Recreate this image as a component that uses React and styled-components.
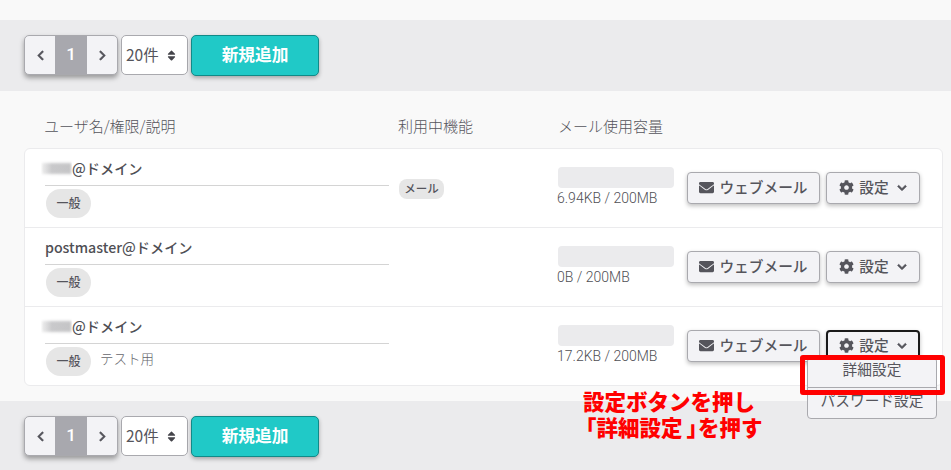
import React from 'react'
import styled, { createGlobalStyle } from 'styled-components'
import { FaChevronLeft, FaChevronRight, FaChevronDown, FaEnvelope, FaCog, FaSort } from 'react-icons/fa'

const GlobalStyle = createGlobalStyle`
  html, body { margin: 0; padding: 0; background: #f9f9f9; }
  body {
    width: 951px;
    height: 470px;
    overflow: hidden;
    font-family: "Noto Sans CJK JP", "Noto Sans", sans-serif;
    color: #55555c;
  }
  * { box-sizing: border-box; }
`

const users = [
  { blurred: true, name: '@ドメイン', feature: 'メール', used: '6.94KB / 200MB' },
  { name: 'postmaster@ドメイン', used: '0B / 200MB' },
  { blurred: true, name: '@ドメイン', note: 'テスト用', used: '17.2KB / 200MB', open: true },
]

const Toolbar = ({ bottom }) => (
  <Bar $bottom={bottom}>
    <Pager>
      <PageArrow><FaChevronLeft /></PageArrow>
      <PageNumber>1</PageNumber>
      <PageArrow><FaChevronRight /></PageArrow>
    </Pager>
    <PerPage>20件<FaSort /></PerPage>
    <AddButton>新規追加</AddButton>
  </Bar>
)

const App = () => {
  return (
    <Page>
      <GlobalStyle />
      <Toolbar />
      <Content>
        <HeaderRow>
          <span>ユーザ名/権限/説明</span>
          <span>利用中機能</span>
          <span>メール使用容量</span>
        </HeaderRow>
        <Card>
          {users.map((user, i) => (
            <Row key={i}>
              <NameCell>
                <UserName>
                  {user.blurred && <BlurPatch />}
                  {user.name}
                </UserName>
                <RoleLine>
                  <RolePill>一般</RolePill>
                  {user.note && <Note>{user.note}</Note>}
                </RoleLine>
              </NameCell>
              <FeatureCell>
                {user.feature && <FeaturePill>{user.feature}</FeaturePill>}
              </FeatureCell>
              <UsageCell>
                <UsageBar />
                <UsageText>{user.used}</UsageText>
              </UsageCell>
              <Actions>
                <ActionButton $width={133}>
                  <FaEnvelope size={15} /><ButtonLabel>ウェブメール</ButtonLabel>
                </ActionButton>
                <SettingsWrap>
                  <ActionButton $width={94} $focused={user.open}>
                    <FaCog size={15} /><ButtonLabel>設定</ButtonLabel><Caret />
                  </ActionButton>
                  {user.open && (
                    <Menu>
                      <MenuItem>詳細設定</MenuItem>
                      <MenuItem>パスワード設定</MenuItem>
                    </Menu>
                  )}
                  {user.open && <Highlight />}
                </SettingsWrap>
              </Actions>
            </Row>
          ))}
        </Card>
      </Content>
      <Toolbar bottom />
      <Annotation>
        設定ボタンを押し<br />
        <OpenBracket>「</OpenBracket>詳細設定<CloseBracket>」</CloseBracket>を押す
      </Annotation>
    </Page>
  )
}

export default App

const Page = styled.div`
  position: relative;
  width: 951px;
  height: 470px;
  padding-top: 20px;
  overflow: hidden;
`

const Bar = styled.div`
  height: ${(p) => (p.$bottom ? '69px' : '71px')};
  padding: 15px 24px 0;
  background: #ebebed;
  display: flex;
  align-items: flex-start;
  gap: 3px;
`

const Pager = styled.div`
  width: 94px;
  height: 40px;
  display: flex;
  border: 1px solid #a9a9ae;
  border-radius: 5px;
  overflow: hidden;
  background: #f3f3f6;
  box-shadow: 0 3px 5px rgba(0, 0, 0, 0.35);
`

const PageArrow = styled.div`
  flex: 1;
  display: flex;
  align-items: center;
  justify-content: center;
  color: #55555c;
  font-size: 11px;

  svg { stroke: currentColor; stroke-width: 25; }
`

const PageNumber = styled.div`
  width: 32px;
  padding-bottom: 2px;
  display: flex;
  align-items: center;
  justify-content: center;
  background: #a8a8ae;
  color: #fff;
  font-size: 17px;
  font-weight: 500;
  font-family: "Roboto", sans-serif;
`

const PerPage = styled.div`
  width: 67px;
  height: 40px;
  padding: 0 9px 3px 4px;
  display: flex;
  align-items: center;
  justify-content: space-between;
  background: #fff;
  border: 1px solid #a9a9ae;
  border-radius: 5px;
  font-size: 15.5px;
  color: #55555c;

  svg { font-size: 13px; color: #44444a; margin-top: 3px; }
`

const AddButton = styled.div`
  width: 128px;
  height: 41px;
  padding-bottom: 3px;
  display: flex;
  align-items: center;
  justify-content: center;
  background: #20c9c7;
  border: 1px solid #118a88;
  border-radius: 5px;
  color: #fff;
  font-size: 16.7px;
  font-weight: 700;
  box-shadow: 0 2px 4px rgba(0, 0, 0, 0.3);
`

const Content = styled.div`
  height: 310px;
  padding: 24px 8px 0 24px;
`

const HeaderRow = styled.div`
  height: 33px;
  display: grid;
  grid-template-columns: 354px 160px 1fr;
  padding-left: 20px;
  font-size: 15px;
  line-height: 22px;
  font-weight: 300;
  color: #55555c;
`

const Card = styled.div`
  background: #fff;
  border: 1px solid #ebebed;
  border-radius: 6px;
`

const Row = styled.div`
  height: 79px;
  display: grid;
  grid-template-columns: 344px 169px 129px 1fr;
  padding-left: 20px;
  border-bottom: 1px solid #ebebed;

  &:last-child {
    height: 78px;
    border-bottom: 0;
  }
`

const NameCell = styled.div`
  display: flex;
  flex-direction: column;
`

const UserName = styled.div`
  height: 37px;
  padding-top: 8px;
  border-bottom: 1px solid #d4d4d4;
  font-size: 14.2px;
  line-height: 22px;
  font-weight: 500;
  color: #4f4f55;
  display: flex;
  align-items: flex-start;
`

const BlurPatch = styled.span`
  width: 31px;
  height: 17px;
  margin: 3px 0 0 -4px;
  background: linear-gradient(90deg, #f1f1f1, #c9c9cb 35%, #c4c4c6);
  box-shadow: inset 0 3px 3px #fff, inset 0 -3px 3px #fff;
`

const RoleLine = styled.div`
  display: flex;
  align-items: center;
  gap: 9px;
  padding: 3px 0 0 1px;
`

const RolePill = styled.span`
  width: 45px;
  height: 29px;
  padding-bottom: 2px;
  display: flex;
  align-items: center;
  justify-content: center;
  background: #e6e6e6;
  border-radius: 15px;
  font-size: 12px;
  font-weight: 500;
  color: #55555c;
`

const Note = styled.span`
  padding-bottom: 7px;
  font-size: 13.5px;
  font-weight: 300;
  color: #66666c;
`

const FeatureCell = styled.div`
  display: flex;
  align-items: flex-start;
  padding: 30px 0 0 10px;
`

const FeaturePill = styled.span`
  width: 45px;
  height: 20px;
  padding-bottom: 2px;
  display: flex;
  align-items: center;
  justify-content: center;
  background: #e6e6e6;
  border-radius: 8px;
  font-size: 11.5px;
  font-weight: 500;
  color: #55555c;
`

const UsageCell = styled.div`
  padding-top: 18px;
`

const UsageBar = styled.div`
  width: 116px;
  height: 21px;
  background: #ebebed;
  border-radius: 4px;
`

const UsageText = styled.div`
  margin: 1px 0 0 -1px;
  font-family: "Roboto", sans-serif;
  font-size: 14px;
  font-weight: 300;
  line-height: 18px;
  color: #4f4f55;
`

const Actions = styled.div`
  display: flex;
  gap: 6px;
  padding-top: 23px;
`

const SettingsWrap = styled.div`
  position: relative;
`

const ActionButton = styled.div`
  width: ${(p) => p.$width}px;
  height: 32px;
  padding-bottom: 1px;
  display: flex;
  align-items: center;
  justify-content: center;
  gap: 5px;
  background: #f3f3f6;
  border: ${(p) => (p.$focused ? '2px solid #1a1a1a' : '1px solid #a9a9ae')};
  border-radius: 4px;
  color: #55555c;
  box-shadow: 0 2px 4px rgba(0, 0, 0, 0.25);
`

const ButtonLabel = styled.span`
  margin-bottom: 3px;
  font-size: 14.7px;
  font-weight: 500;
`

const Caret = styled(FaChevronDown)`
  width: 10px;
  height: 10px;
  margin-left: 3px;
  stroke: currentColor;
  stroke-width: 35;
`

const Menu = styled.div`
  position: absolute;
  top: 27px;
  left: -19px;
  width: 130px;
  height: 62px;
  background: #f3f3f6;
  border: 1px solid #a9a9ae;
  border-radius: 4px;
`

const MenuItem = styled.div`
  height: 30px;
  padding-bottom: 8px;
  display: flex;
  align-items: center;
  justify-content: center;
  font-size: 14.7px;
  color: #55555c;
  border-bottom: 1px solid #a9a9ae;

  &:last-child { border-bottom: 0; padding-bottom: 7px; }
`

const Highlight = styled.div`
  position: absolute;
  top: 25px;
  left: -26px;
  width: 145px;
  height: 40px;
  border: 5px solid #ff0000;
  border-radius: 3px;
`

const Annotation = styled.div`
  position: absolute;
  left: 583px;
  top: 388px;
  color: #ff0000;
  font-size: 21.5px;
  line-height: 26px;
  font-weight: 900;
  white-space: nowrap;
`

const OpenBracket = styled.span`
  margin-left: -8px;
`

const CloseBracket = styled.span`
  padding-left: 4px;
  margin-right: -10px;
`
